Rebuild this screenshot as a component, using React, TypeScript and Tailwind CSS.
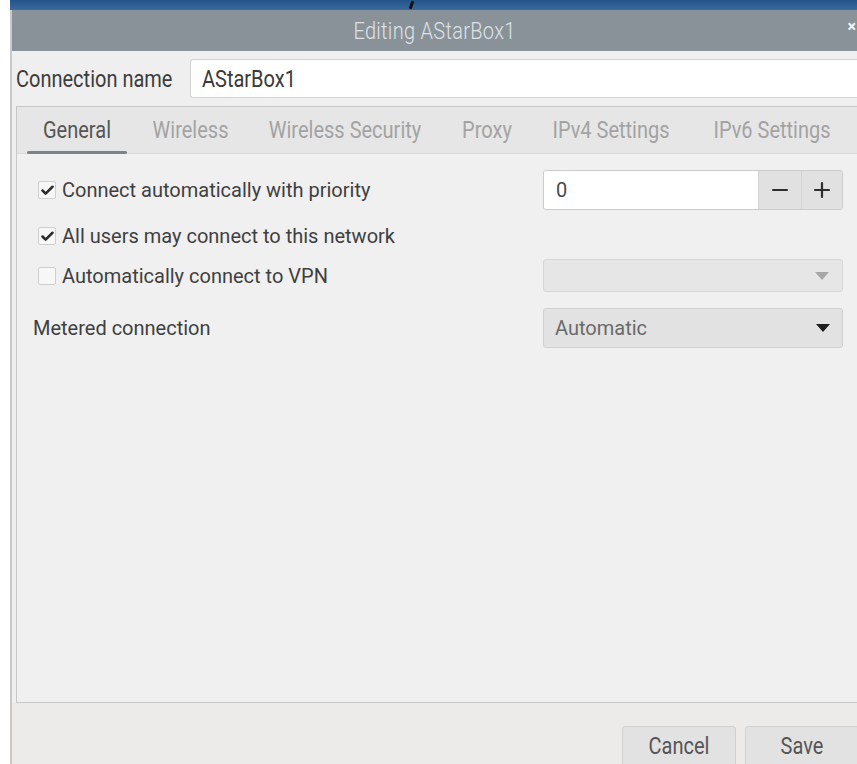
import { Check, Minus, Plus } from 'lucide-react';

const tabs = [
  { label: 'General', w: 'w-[100px]', active: true },
  { label: 'Wireless', w: 'w-[103px]' },
  { label: 'Wireless Security', w: 'w-[182px]' },
  { label: 'Proxy', w: 'w-[78px]' },
  { label: 'IPv4 Settings', w: 'w-[146px]' },
  { label: 'IPv6 Settings', w: 'w-[152px]' },
];

function Box({ checked }: { checked?: boolean }) {
  return (
    <span className="flex h-[18px] w-[18px] shrink-0 items-center justify-center rounded-[2px] border border-[#cfcfcf] bg-[#f7f7f7]">
      {checked && <Check className="h-[15px] w-[15px] text-[#2b2b2b]" strokeWidth={4} />}
    </span>
  );
}

function Caret({ dim }: { dim?: boolean }) {
  return (
    <svg width="14" height="8" viewBox="0 0 14 8" className={dim ? 'text-[#a6a6a6]' : 'text-[#1e1e1e]'}>
      <path d="M0 0h14L7 8z" fill="currentColor" />
    </svg>
  );
}

export default function App() {
  return (
    <div className="relative h-[764px] w-[857px] overflow-hidden bg-white font-['Roboto',sans-serif] text-[20px]">
      {/* desktop strip behind the dialog */}
      <div className="ml-[10px] flex h-[10px] bg-gradient-to-b from-[#24538a] to-[#3a6aa0]">
        <span className="ml-[400px] mt-[1px] h-[8px] w-[3px] rotate-[20deg] bg-[#111]" />
      </div>

      <div className="ml-[10px] flex h-[754px] flex-col border-l-2 border-[#c9c9c9] bg-[#efefef]">
        {/* title bar */}
        <div className="relative flex h-[41px] shrink-0 items-center justify-center bg-[#8a9299] text-[#dde2e6]">
          <span className="inline-block scale-y-[1.18] font-light tracking-[0.3px]">Editing AStarBox1</span>
          <span className="absolute right-[1px] top-[9px] text-[16px] font-bold leading-none text-[#f4f4f4]">×</span>
        </div>

        {/* connection name */}
        <div className="flex h-[55px] shrink-0 items-center">
          <span className="inline-block w-[178px] shrink-0 scale-y-[1.18] pl-[4px] text-[#3c3c3c]">Connection name</span>
          <div className="flex h-[39px] flex-1 items-center rounded-l-[3px] border border-r-0 border-[#d2d2d2] bg-white pl-[11px] text-[#3a3a3a]">
            <span className="inline-block scale-y-[1.18]">AStarBox1</span>
          </div>
        </div>

        {/* notebook */}
        <div className="ml-[4px] mr-[-40px] flex h-[597px] shrink-0 flex-col border border-[#c8c8c8] bg-[#f0f0f0]">
          <div className="flex h-[47px] shrink-0 gap-[12px] border-b border-[#d8d8d8] bg-[#e6e6e6] pl-[10px]">
            {tabs.map((t) => (
              <div key={t.label} className={`${t.w} relative flex shrink-0 items-center justify-center`}>
                <span className={`inline-block scale-y-[1.18] whitespace-nowrap ${t.active ? 'text-[#555]' : 'text-[#a3a3a3]'}`}>
                  {t.label}
                </span>
                {t.active && <span className="absolute bottom-[-1px] left-0 h-[3px] w-full rounded-full bg-[#7b838a]" />}
              </div>
            ))}
          </div>

          <div className="flex flex-col pl-[16px] text-[#3f3f3f]">
            <div className="mt-[16px] flex h-[40px] items-center">
              <label className="flex w-[510px] items-center gap-[6px] pl-[5px]">
                <Box checked />
                Connect automatically with priority
              </label>
              <div className="flex h-[40px] w-[300px] overflow-hidden rounded-[3px] border border-[#cbcbcb]">
                <div className="flex flex-1 items-center bg-white pl-[12px] text-[#4a4a4a]">0</div>
                <div className="flex w-[43px] items-center justify-center border-l border-[#d2d2d2] bg-[#e1e1e1]">
                  <Minus className="h-[24px] w-[24px] text-[#2e2e2e]" strokeWidth={2.2} />
                </div>
                <div className="flex w-[41px] items-center justify-center border-l border-[#d2d2d2] bg-[#e1e1e1]">
                  <Plus className="h-[24px] w-[24px] text-[#2e2e2e]" strokeWidth={2.2} />
                </div>
              </div>
            </div>

            <div className="mt-[6px] flex h-[40px] items-center">
              <label className="flex items-center gap-[6px] pl-[5px]">
                <Box checked />
                All users may connect to this network
              </label>
            </div>

            <div className="mt-[3px] flex h-[33px] items-center">
              <label className="flex w-[510px] items-center gap-[6px] pl-[5px]">
                <Box />
                Automatically connect to VPN
              </label>
              <div className="flex h-[33px] w-[300px] items-center justify-end rounded-[3px] border border-[#d6d6d6] bg-[#e6e6e6] pr-[13px]">
                <Caret dim />
              </div>
            </div>

            <div className="mt-[16px] flex h-[40px] items-center">
              <span className="w-[510px]">Metered connection</span>
              <div className="flex h-[40px] w-[300px] items-center justify-between rounded-[3px] border border-[#d0d0d0] bg-[#e2e2e2] pl-[11px] pr-[12px] text-[#6a6a6a]">
                Automatic
                <Caret />
              </div>
            </div>
          </div>
        </div>

        {/* dialog buttons */}
        <div className="mr-[-2px] flex flex-1 items-start justify-end gap-[9px] bg-[#ecebea] pt-[23px]">
          <button className="flex h-[50px] w-[114px] items-start justify-center rounded-[3px] border border-[#d0d0d0] bg-[#e2e2e2] pt-[4px] text-[#555]">
            <span className="inline-block scale-y-[1.18]">Cancel</span>
          </button>
          <button className="flex h-[50px] w-[114px] items-start justify-center rounded-[3px] border border-[#d0d0d0] bg-[#e2e2e2] pt-[4px] text-[#555]">
            <span className="inline-block scale-y-[1.18]">Save</span>
          </button>
        </div>
      </div>
    </div>
  );
}
